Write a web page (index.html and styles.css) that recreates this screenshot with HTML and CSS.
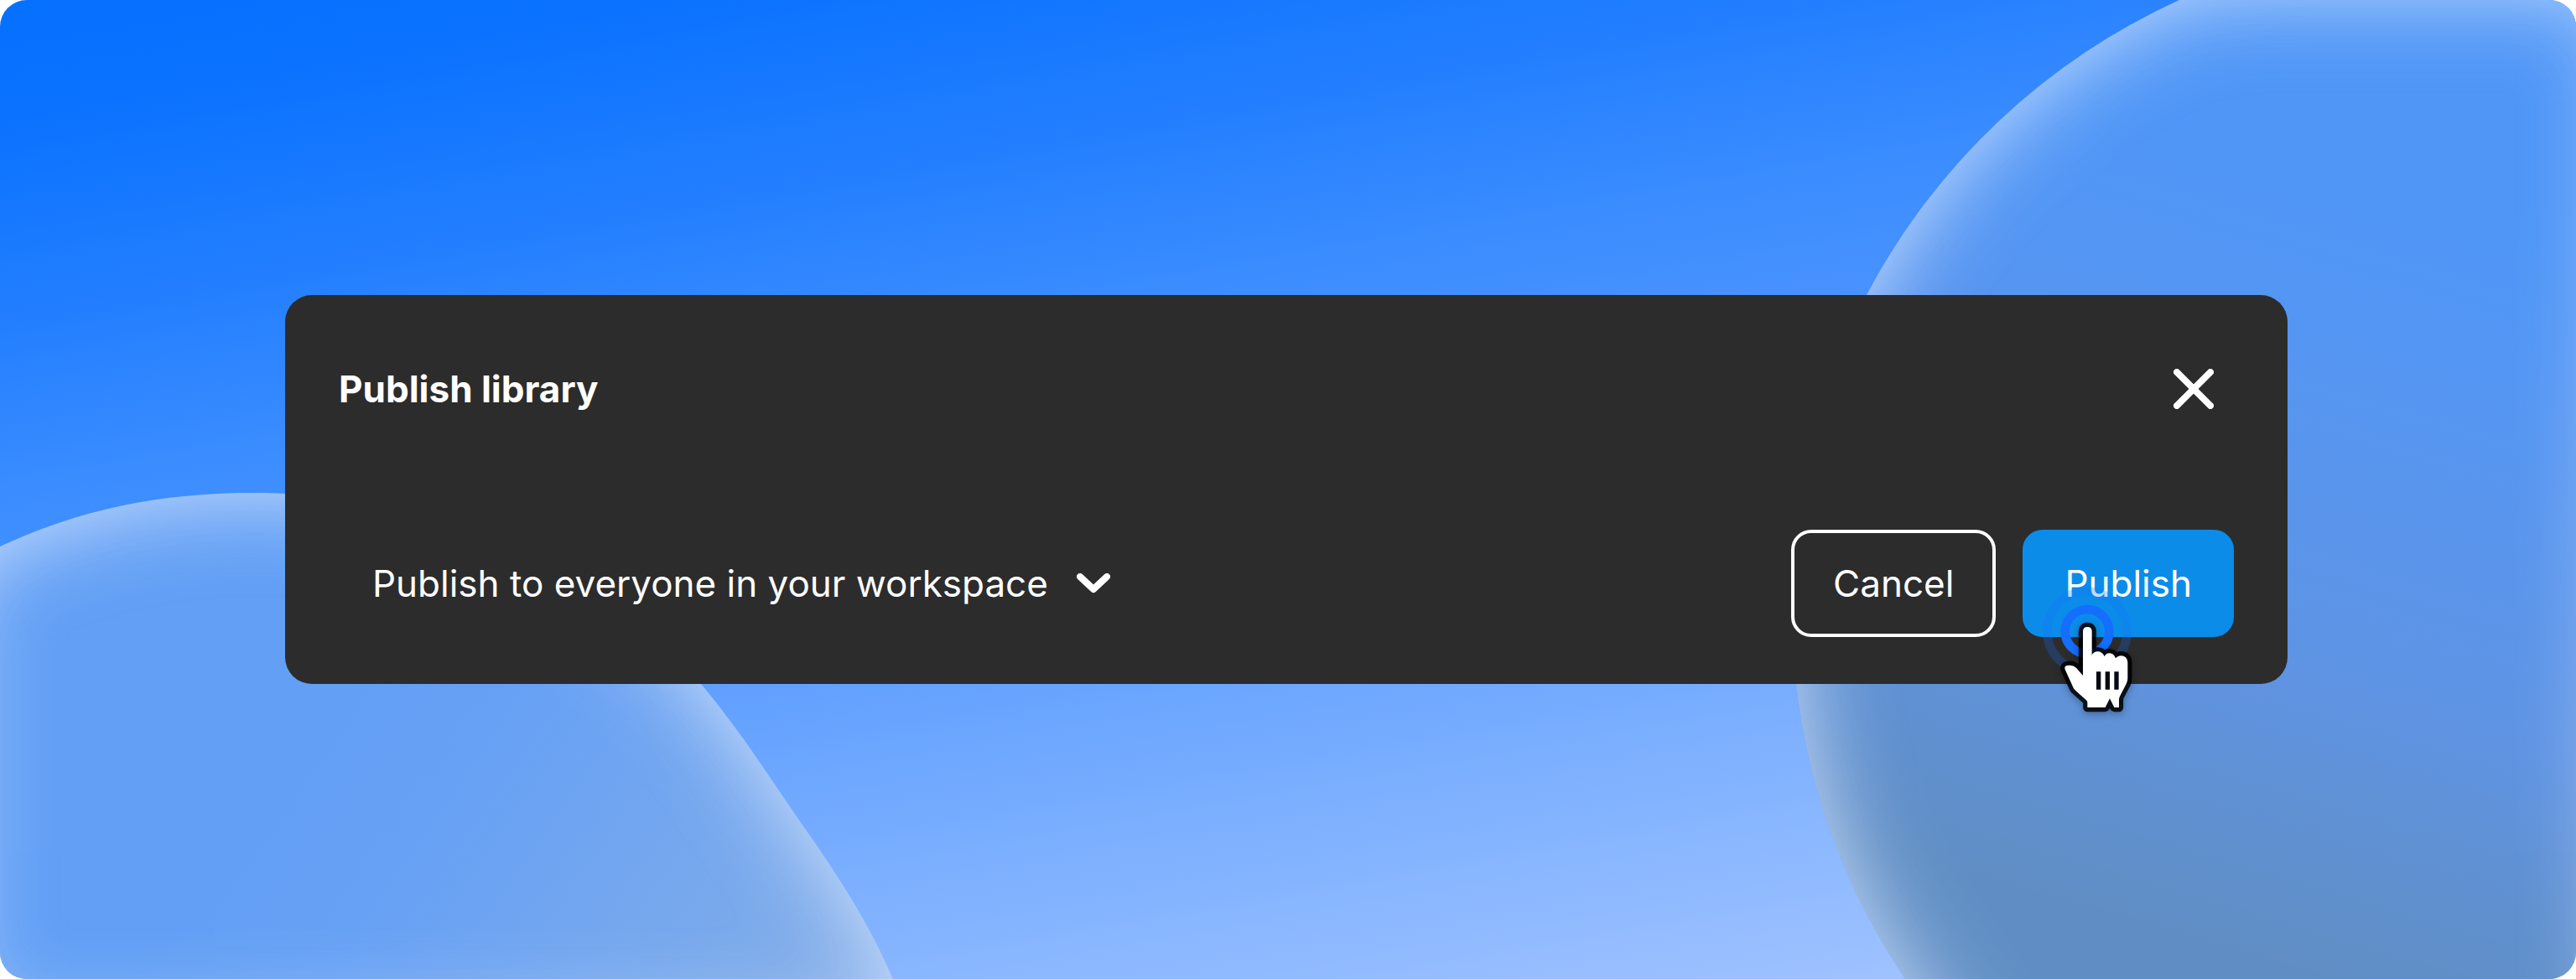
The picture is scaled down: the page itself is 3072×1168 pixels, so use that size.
FILE: index.html
```
<!DOCTYPE html>
<html lang="en">
<head>
<meta charset="utf-8">
<title>Publish library</title>
<link rel="stylesheet" href="styles.css">
</head>
<body>
<main class="stage">
  <svg class="backdrop" viewBox="0 0 3072 1168" preserveAspectRatio="xMidYMid slice" aria-hidden="true">
    <defs>
      <linearGradient id="left-fill" gradientUnits="userSpaceOnUse" x1="400" y1="780" x2="960" y2="1168">
        <stop offset="0" stop-color="#629ff5"/>
        <stop offset="0.3" stop-color="#67a1f5"/>
        <stop offset="1" stop-color="#80ace9"/>
      </linearGradient>
      <linearGradient id="right-fill" gradientUnits="userSpaceOnUse" x1="2900" y1="250" x2="2640" y2="1130">
        <stop offset="0" stop-color="#4f96f7"/>
        <stop offset="0.2" stop-color="#5596f3"/>
        <stop offset="0.62" stop-color="#5f94e4"/>
        <stop offset="0.8" stop-color="#6091d3"/>
        <stop offset="1" stop-color="#608ec4"/>
      </linearGradient>
      <path id="left-shape" d="M0 652C90 610 185 588 302 588C520 588 705 675 836 816C885 874 925 939 968 1000C1008 1058 1038 1106 1065 1168H0Z"/>
      <path id="right-shape" d="M2599 0A793 793 0 0 0 2226 352C2158 480 2126 690 2142 816A793 793 0 0 0 2272 1168H3072V0Z"/>
      <clipPath id="left-clip"><use href="#left-shape"/></clipPath>
      <clipPath id="right-clip"><use href="#right-shape"/></clipPath>
      <filter id="soft" filterUnits="userSpaceOnUse" x="-400" y="-400" width="3872" height="2368">
        <feGaussianBlur stdDeviation="56"/>
      </filter>
    </defs>
    <use href="#left-shape" fill="url(#left-fill)"/>
    <g clip-path="url(#left-clip)">
      <path class="glow" filter="url(#soft)" d="M-400 300H1400V1568H-400ZM-50 676C90 610 185 588 302 588C520 588 705 675 836 816C885 874 925 939 968 1000C1008 1058 1038 1106 1065 1168L1090 1230H-50Z"/>
    </g>
    <use href="#right-shape" fill="url(#right-fill)"/>
    <g clip-path="url(#right-clip)">
      <path class="glow" filter="url(#soft)" d="M1900 -400H3472V1968H1900ZM3122 -12H2640L2599 0A793 793 0 0 0 2226 352C2158 480 2126 690 2142 816A793 793 0 0 0 2272 1168L2500 1500H3122Z"/>
    </g>
  </svg>

  <section class="dialog" role="dialog" aria-labelledby="dialog-title">
    <header class="dialog-header">
      <h1 class="dialog-title" id="dialog-title">Publish library</h1>
      <button class="close" type="button" aria-label="Close">
        <svg width="48" height="48" viewBox="0 0 48 48" aria-hidden="true">
          <path d="M4 4L44 44M44 4L4 44"/>
        </svg>
      </button>
    </header>
    <footer class="dialog-footer">
      <div class="audience">
        <select class="audience-select" aria-label="Audience">
          <option>Publish to everyone in your workspace</option>
        </select>
        <svg class="chevron" width="40" height="24" viewBox="0 0 40 24" aria-hidden="true">
          <path d="M4 4L20 19L36 4"/>
        </svg>
      </div>
      <div class="actions">
        <button class="button button-outline" type="button">Cancel</button>
        <div class="publish">
          <button class="button button-primary" type="button">Publish</button>
          <svg class="pointer" width="120" height="160" viewBox="99 21 360 480" aria-hidden="true">
            <circle class="ring ring-outer" cx="267" cy="190" r="143"/>
            <circle class="ring" cx="267" cy="190" r="79"/>
            <path class="hand-outline" d="M252 348V190Q252 174 268 174Q284 174 284 190V275C290 258 320 256 329 280C335 262 362 264 369 286C382 270 412 274 412 302V358Q412 368 408 376L384 422Q381 428 381 434V462H364L348 430L332 462H268V444Q268 438 262 434L226 402Q221 398 218 392L188 326Q184 314 196 312Q216 309 228 320Z"/>
            <path class="hand" d="M252 348V190Q252 174 268 174Q284 174 284 190V275C290 258 320 256 329 280C335 262 362 264 369 286C382 270 412 274 412 302V358Q412 368 408 376L384 422Q381 428 381 434V462H364L348 430L332 462H268V444Q268 438 262 434L226 402Q221 398 218 392L188 326Q184 314 196 312Q216 309 228 320Z"/>
            <path class="hand-lines" d="M308 334V398M340 334V398M372 334V398"/>
          </svg>
        </div>
      </div>
    </footer>
  </section>
</main>
</body>
</html>
```
FILE: styles.css
```
* {
  box-sizing: border-box;
}

body {
  margin: 0;
  background: #fff;
  color: #fff;
  font-family: Inter, "Liberation Sans", sans-serif;
  font-size: 44px;
  line-height: 64px;
}

.stage {
  position: relative;
  display: flex;
  align-items: center;
  min-height: 100vh;
  padding: 64px 344px 64px 340px;
  border-radius: 32px;
  overflow: hidden;
  background: linear-gradient(170deg, #0670ff 0%, #0a72ff 8%, #227eff 22%, #3a8cff 34%, #4892ff 43%, #64a2ff 59%, #8ab7ff 80%, #9ec1ff 91%, #aac8ff 100%);
}

.backdrop {
  position: absolute;
  inset: 0;
  width: 100%;
  height: 100%;
}

.glow {
  fill: #d8e7ff;
  fill-rule: evenodd;
  opacity: 0.9;
}

.dialog {
  position: relative;
  flex: 1;
  display: flex;
  flex-direction: column;
  gap: 136px;
  padding: 80px 64px 56px;
  border-radius: 32px;
  background: #2c2c2c;
}

.dialog-header,
.dialog-footer,
.actions {
  display: flex;
  align-items: center;
}

.dialog-header,
.dialog-footer {
  justify-content: space-between;
}

.dialog-title {
  margin: 0;
  font-size: 44px;
  font-weight: 700;
}

.close {
  display: flex;
  margin-right: 24px;
  padding: 0;
  border: 0;
  background: none;
}

.close path,
.chevron path {
  fill: none;
  stroke: #fff;
  stroke-width: 8;
  stroke-linecap: round;
  stroke-linejoin: round;
}

.audience {
  display: grid;
  align-items: center;
  margin-left: 40px;
}

.audience-select {
  grid-area: 1 / 1;
  appearance: none;
  padding: 0 74px 0 0;
  border: 0;
  background: none;
  color: inherit;
  font: inherit;
}

.chevron {
  grid-area: 1 / 1;
  justify-self: end;
  pointer-events: none;
}

.actions {
  gap: 32px;
}

.button {
  height: 128px;
  padding: 0 46px;
  border: 4px solid #fff;
  border-radius: 24px;
  background: none;
  color: inherit;
  font: inherit;
}

.button-primary {
  border-color: #0c8ce9;
  background: #0c8ce9;
}

.publish {
  position: relative;
  display: flex;
}

.pointer {
  position: absolute;
  left: 21px;
  top: 65px;
  overflow: visible;
  pointer-events: none;
}

.ring {
  fill: none;
  stroke: #146eff;
  stroke-width: 32;
}

.ring-outer {
  opacity: 0.25;
}

.hand-outline {
  fill: none;
  stroke: #000;
  stroke-opacity: 0.86;
  stroke-width: 31;
  stroke-linejoin: round;
  filter: drop-shadow(0 8px 12px rgb(0 0 0 / 0.35));
}

.hand {
  fill: #fff;
}

.hand-lines {
  stroke: #070c14;
  stroke-width: 16;
}
```
